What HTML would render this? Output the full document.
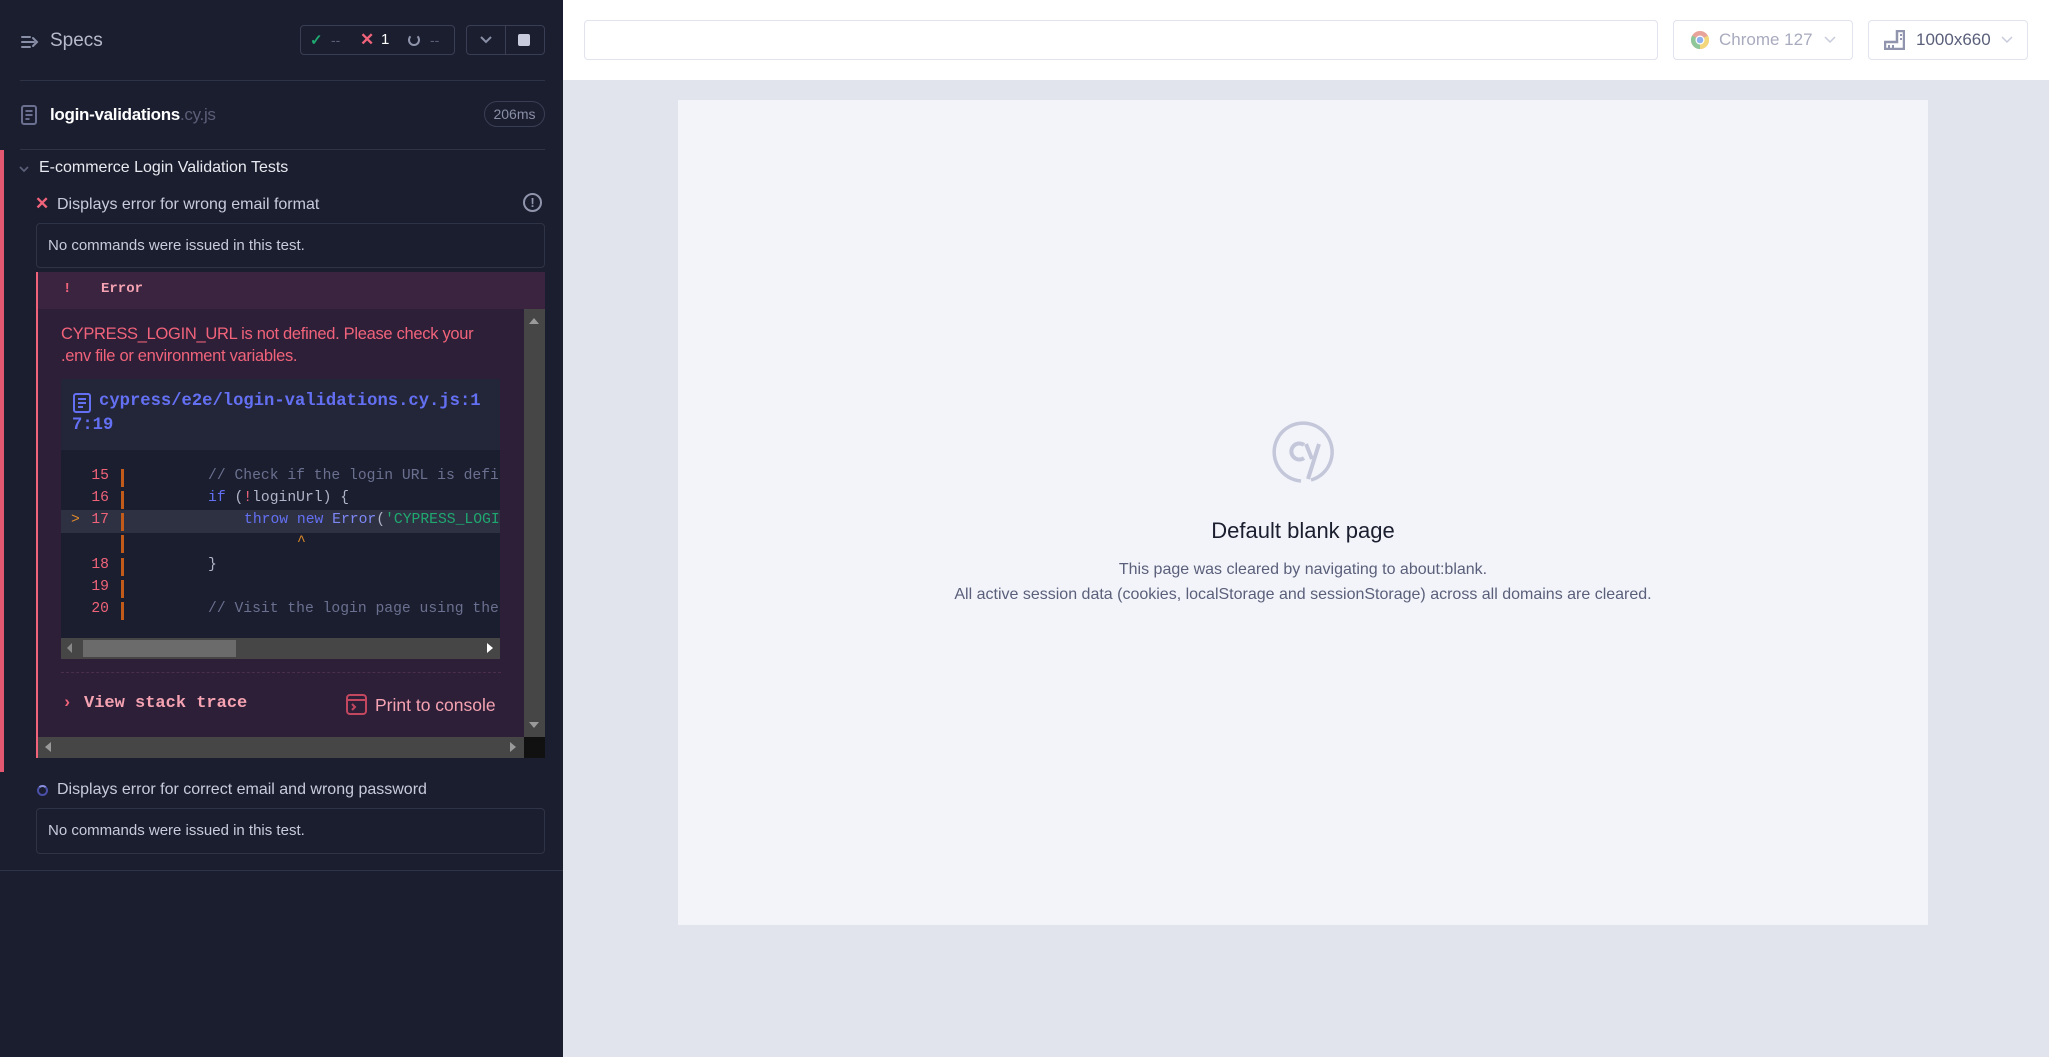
<!DOCTYPE html>
<html><head><meta charset="utf-8"><style>
*{margin:0;padding:0;box-sizing:border-box}
body{width:2049px;height:1057px;overflow:hidden;font-family:"Liberation Sans",sans-serif;background:#e1e3ed;position:relative}
.a{position:absolute;white-space:nowrap}
#left{position:absolute;left:0;top:0;width:563px;height:1057px;background:#1b1e2e}
.mono{font-family:"Liberation Mono",monospace}
.ln{position:absolute;left:40px;width:69px;text-align:right;color:#f0637a;font-size:14.7px}
.bar{position:absolute;left:121px;width:3px;height:18px;background:#c25a1a}
.code{position:absolute;left:208px;font-size:14.7px;color:#b0b4c8;white-space:pre}
</style></head><body>
<div id="left">
  <svg class="a" style="left:21px;top:35px" width="18" height="14" viewBox="0 0 18 14"><path d="M1 2h8M1 7h12M1 12h8M12 3l4 4-4 4" stroke="#8a8fa8" stroke-width="2" fill="none" stroke-linecap="round"/></svg>
  <div class="a" style="left:50px;top:30px;font-size:19px;color:#b7bacb">Specs</div>
  <div class="a" style="left:300px;top:25px;width:155px;height:30px;border:1px solid #3a3e54;border-radius:4px"></div>
  <div class="a" style="left:310px;top:31px;font-size:15px;color:#1fa971;font-weight:bold">✓</div>
  <div class="a" style="left:331px;top:32px;font-size:14px;color:#5a5e78">--</div>
  <div class="a" style="left:360px;top:30px;font-size:17px;color:#f0637a;font-weight:bold">✕</div>
  <div class="a" style="left:381px;top:31px;font-size:15px;color:#fff">1</div>
  <div class="a" style="left:408px;top:34px;width:12px;height:12px;border:2.5px solid #9095ad;border-top-color:transparent;border-radius:50%"></div>
  <div class="a" style="left:430px;top:32px;font-size:14px;color:#5a5e78">--</div>
  <div class="a" style="left:466px;top:25px;width:79px;height:30px;border:1px solid #3a3e54;border-radius:4px"></div>
  <div class="a" style="left:505px;top:25px;width:1px;height:30px;background:#3a3e54"></div>
  <svg class="a" style="left:479px;top:35px" width="14" height="10"><path d="M2 2l5 5 5-5" stroke="#8a8fa8" stroke-width="2" fill="none"/></svg>
  <div class="a" style="left:518px;top:34px;width:12px;height:12px;background:#c8cbdc;border-radius:2px"></div>
  <div class="a" style="left:20px;top:80px;width:525px;height:1px;background:#2f3346"></div>
  <svg class="a" style="left:21px;top:105px" width="16" height="20" viewBox="0 0 16 20"><rect x="1" y="1" width="14" height="18" rx="2" fill="none" stroke="#6b7090" stroke-width="2"/><path d="M4.5 6h7M4.5 10h7M4.5 14h4" stroke="#6b7090" stroke-width="2"/></svg>
  <div class="a" style="left:50px;top:105px;font-size:17px;color:#fff;font-weight:bold;letter-spacing:-0.3px">login-validations<span style="color:#5a5e78;font-weight:normal">.cy.js</span></div>
  <div class="a" style="left:484px;top:101px;width:61px;height:26px;border:1px solid #3a3e54;border-radius:13px;color:#8a8fa8;font-size:14px;text-align:center;line-height:24px">206ms</div>
  <div class="a" style="left:20px;top:149px;width:525px;height:1px;background:#2f3346"></div>
  <div class="a" style="left:0;top:150px;width:4px;height:622px;background:#e45770"></div>
  <svg class="a" style="left:18px;top:165px" width="12" height="8"><path d="M2 2l4 4 4-4" stroke="#5a5e78" stroke-width="1.8" fill="none"/></svg>
  <div class="a" style="left:39px;top:159px;font-size:16px;color:#e8e9f0">E-commerce Login Validation Tests</div>
  <div class="a" style="left:35px;top:194px;font-size:17px;color:#f0637a;font-weight:bold">✕</div>
  <div class="a" style="left:57px;top:196px;font-size:16px;color:#c8cbdc">Displays error for wrong email format</div>
  <div class="a" style="left:523px;top:193px;width:19px;height:19px;border:2px solid #9095ad;border-radius:50%;color:#9095ad;font-size:13px;font-weight:bold;text-align:center;line-height:15px">!</div>
  <div class="a" style="left:36px;top:223px;width:509px;height:45px;border:1px solid #2f3346;border-radius:4px"></div>
  <div class="a" style="left:48px;top:237px;font-size:15px;color:#c8cbdc">No commands were issued in this test.</div>
  <div class="a" style="left:36px;top:272px;width:509px;height:486px;background:#2e1f38;border-left:2px solid #f0637a"></div>
  <div class="a" style="left:38px;top:272px;width:507px;height:37px;background:#3b2440"></div>
  <div class="a mono" style="left:63px;top:281px;font-size:14px;color:#f0637a;font-weight:bold">!</div>
  <div class="a mono" style="left:101px;top:281px;font-size:14px;color:#f5a3b2;font-weight:bold">Error</div>
  <div class="a" style="left:524px;top:309px;width:21px;height:428px;background:#464646"></div>
  <div class="a" style="left:529px;top:318px;border:5px solid transparent;border-bottom:6px solid #9a9a9a;border-top:0"></div>
  <div class="a" style="left:529px;top:722px;border:5px solid transparent;border-top:6px solid #9a9a9a;border-bottom:0"></div>
  <div class="a" style="left:38px;top:737px;width:486px;height:21px;background:#464646"></div>
  <div class="a" style="left:524px;top:737px;width:21px;height:21px;background:#111"></div>
  <div class="a" style="left:45px;top:742px;border:5px solid transparent;border-right:6px solid #9a9a9a;border-left:0"></div>
  <div class="a" style="left:510px;top:742px;border:5px solid transparent;border-left:6px solid #9a9a9a;border-right:0"></div>
  <div class="a" style="left:61px;top:323px;font-size:16.5px;line-height:22px;color:#f0637a;letter-spacing:-0.3px">CYPRESS_LOGIN_URL is not defined. Please check your<br>.env file or environment variables.</div>
  <div class="a" style="left:61px;top:379px;width:439px;height:280px;background:#1b1e2e;overflow:hidden">
    <div class="a" style="left:0;top:0;width:439px;height:71px;background:#232638"></div>
  </div>
  <svg class="a" style="left:73px;top:393px" width="18" height="20" viewBox="0 0 18 20"><rect x="1" y="1" width="16" height="18" rx="2" fill="none" stroke="#6470f3" stroke-width="2"/><path d="M5 6h8M5 10h8M5 14h5" stroke="#6470f3" stroke-width="2"/></svg>
  <div class="a mono" style="left:99px;top:392px;font-size:17.2px;color:#6470f3;font-weight:bold">cypress/e2e/login-validations.cy.js:1</div>
  <div class="a mono" style="left:72px;top:416px;font-size:17.2px;color:#6470f3;font-weight:bold">7:19</div>
  <div class="a" style="left:61px;top:510px;width:439px;height:23px;background:#2e3142"></div>
  <div class="ln mono" style="top:468px">15</div><div class="bar" style="top:469px"></div>
  <div class="ln mono" style="top:490px">16</div><div class="bar" style="top:491px"></div>
  <div class="a mono" style="left:71px;top:512px;font-size:14.7px;color:#e08a2a">&gt;</div>
  <div class="ln mono" style="top:512px">17</div><div class="bar" style="top:513px"></div>
  <div class="bar" style="top:535px"></div>
  <div class="ln mono" style="top:557px">18</div><div class="bar" style="top:558px"></div>
  <div class="ln mono" style="top:579px">19</div><div class="bar" style="top:580px"></div>
  <div class="ln mono" style="top:601px">20</div><div class="bar" style="top:602px"></div>
  <div style="position:absolute;left:0;top:0;width:500px;height:1057px;clip-path:inset(0 0 0 200px)">
  <div class="code mono" style="top:468px;color:#6b7090">// Check if the login URL is defined</div>
  <div class="code mono" style="top:490px"><span style="color:#6470f3">if</span> (<span style="color:#f0637a">!</span>loginUrl) {</div>
  <div class="code mono" style="top:512px;left:244px"><span style="color:#6470f3">throw new</span> <span style="color:#7d88f5">Error</span>(<span style="color:#1fa971">'CYPRESS_LOGIN_URL</span></div>
  <div class="code mono" style="top:534px;left:297px;color:#e08a2a">^</div>
  <div class="code mono" style="top:557px">}</div>
  <div class="code mono" style="top:601px;color:#6b7090">// Visit the login page using the URL</div>
  </div>
  <div class="a" style="left:61px;top:638px;width:439px;height:21px;background:#464646"></div>
  <div class="a" style="left:83px;top:640px;width:153px;height:17px;background:#6b6b6b"></div>
  <div class="a" style="left:67px;top:643px;border:5px solid transparent;border-right:5px solid #888;border-left:0"></div>
  <div class="a" style="left:487px;top:643px;border:5px solid transparent;border-left:6px solid #fff;border-right:0"></div>
  <div class="a" style="left:61px;top:672px;width:440px;border-top:1px dashed #4a2e4c"></div>
  <div class="a mono" style="left:62px;top:694px;font-size:17px;color:#f0637a;font-weight:bold">›</div>
  <div class="a mono" style="left:84px;top:694px;font-size:17px;color:#f5a3b2;font-weight:bold">View stack trace</div>
  <svg class="a" style="left:346px;top:694px" width="21" height="21" viewBox="0 0 21 21"><rect x="1" y="1" width="19" height="19" rx="3" fill="none" stroke="#c2475f" stroke-width="2"/><path d="M1 6h19M6 10l3 3-3 3" stroke="#c2475f" stroke-width="2" fill="none"/></svg>
  <div class="a" style="left:375px;top:695px;font-size:17.5px;color:#f5a3b2">Print to console</div>
  <div class="a" style="left:37px;top:785px;width:11px;height:11px;border:2.5px solid #4a4fa8;border-top-color:#8a8fe0;border-radius:50%"></div>
  <div class="a" style="left:57px;top:781px;font-size:16px;color:#c8cbdc">Displays error for correct email and wrong password</div>
  <div class="a" style="left:36px;top:808px;width:509px;height:46px;border:1px solid #2f3346;border-radius:4px"></div>
  <div class="a" style="left:48px;top:822px;font-size:15px;color:#c8cbdc">No commands were issued in this test.</div>
  <div class="a" style="left:0;top:870px;width:563px;height:1px;background:#2f3346"></div>
</div>
<div class="a" style="left:563px;top:0;width:1486px;height:80px;background:#fff"></div>
<div class="a" style="left:584px;top:20px;width:1074px;height:40px;border:1px solid #e1e3ed;border-radius:4px"></div>
<div class="a" style="left:1673px;top:20px;width:180px;height:40px;border:1px solid #e1e3ed;border-radius:4px"></div>
<svg class="a" style="left:1690px;top:30px" width="20" height="20" viewBox="0 0 20 20"><circle cx="10" cy="10" r="9" fill="#e8a49a"/><path d="M10 10L2.2 5.5A9 9 0 0 0 10 19z" fill="#8fc79a"/><path d="M10 10L10 19A9 9 0 0 0 17.8 5.5z" fill="#f3d77c"/><circle cx="10" cy="10" r="4.5" fill="#fff"/><circle cx="10" cy="10" r="3.3" fill="#8fb1ee"/></svg>
<div class="a" style="left:1719px;top:30px;font-size:17px;color:#a8abbe">Chrome 127</div>
<svg class="a" style="left:1824px;top:36px" width="12" height="8"><path d="M1 1l5 5 5-5" stroke="#c8cbdc" stroke-width="1.5" fill="none"/></svg>
<div class="a" style="left:1868px;top:20px;width:160px;height:40px;border:1px solid #e1e3ed;border-radius:4px"></div>
<svg class="a" style="left:1884px;top:30px" width="21" height="20" viewBox="0 0 21 20"><path d="M1 12h12V1h7v18H1z" fill="none" stroke="#9095ad" stroke-width="2.5"/><path d="M5 15v3M9 15v3M16 5h2M16 9h2" stroke="#9095ad" stroke-width="2"/></svg>
<div class="a" style="left:1916px;top:30px;font-size:17px;color:#5a5f7a">1000x660</div>
<svg class="a" style="left:2001px;top:36px" width="12" height="8"><path d="M1 1l5 5 5-5" stroke="#c8cbdc" stroke-width="1.5" fill="none"/></svg>
<div class="a" style="left:678px;top:100px;width:1250px;height:825px;background:#f3f4fa"></div>
<svg class="a" style="left:1271px;top:420px" width="64" height="64" viewBox="0 0 64 64"><path d="M40 60A29 29 0 1 0 30 61" fill="none" stroke="#c4c7d9" stroke-width="3.5"/><path d="M33 25a8 8 0 1 0 0 13" fill="none" stroke="#c4c7d9" stroke-width="4"/><path d="M35 24l6 15M48 24l-11 35" fill="none" stroke="#c4c7d9" stroke-width="4"/></svg>
<div class="a" style="left:678px;width:1250px;top:518px;text-align:center;font-size:22px;color:#1b1e2e">Default blank page</div>
<div class="a" style="left:678px;width:1250px;top:557px;text-align:center;font-size:16px;line-height:25px;color:#5a5f7a;white-space:normal">This page was cleared by navigating to about:blank.<br>All active session data (cookies, localStorage and sessionStorage) across all domains are cleared.</div>
</body></html>
